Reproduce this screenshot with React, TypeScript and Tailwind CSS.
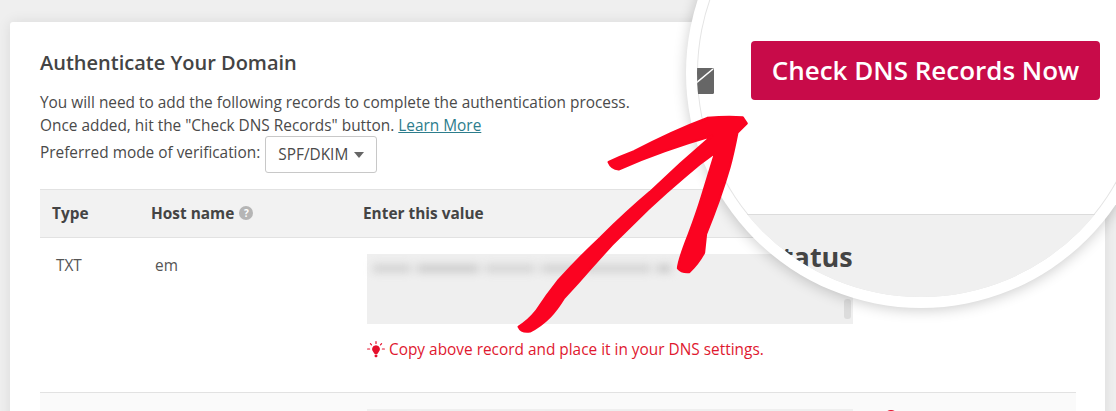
import React from 'react';

function BulbIcon() {
  return (
    <svg width="18" height="18" viewBox="0 0 18 18" className="shrink-0">
      <path d="M9 4.2a4 4 0 0 0-2.4 7.2c.6.5.8 1 .9 1.7h3c.1-.7.3-1.2.9-1.7A4 4 0 0 0 9 4.2z" fill="#e5102c" />
      <rect x="7.6" y="13.6" width="2.8" height="2.6" rx="1" fill="#e5102c" />
      <path d="M9 .6v1.8M3.4 2.6l1.1 1.3M14.6 2.6l-1.1 1.3M.6 8h2M15.4 8h2" stroke="#e5102c" strokeWidth="1.2" strokeLinecap="round" />
    </svg>
  );
}

function DnsValue({ short }: { short?: boolean }) {
  return (
    <div className={`relative w-[486px] bg-[#efefef] ${short ? 'h-[40px]' : 'h-[70px]'}`}>
      <div className="flex gap-[6px] pl-[6px] pt-[11px] blur-[4px]">
        <div className="h-[7px] w-[38px] bg-[#cdcdcd]" />
        <div className="h-[7px] w-[62px] bg-[#c6c6c6]" />
        <div className="h-[7px] w-[50px] bg-[#d0d0d0]" />
        <div className="h-[7px] w-[38px] bg-[#cdcdcd]" />
        <div className="h-[7px] w-[66px] bg-[#cecece]" />
        <div className="h-[7px] w-[14px] bg-[#c2c2c2]" />
      </div>
      {!short && <div className="absolute bottom-[5px] right-[2px] h-[20px] w-[7px] rounded-[3px] bg-[#dcdcdc]" />}
    </div>
  );
}

export default function App() {
  return (
    <div className="relative h-[411px] w-[1116px] overflow-hidden bg-[#efefef] pl-[10px] pt-[22px] font-['Open_Sans',sans-serif] text-[#4a4a4a]">
      <div className="h-[420px] w-[1095px] rounded-[3px] bg-white pl-[30px] pt-[27px] shadow-[0_0_14px_rgba(0,0,0,0.09)]">
        <h2 className="text-[20px] font-semibold leading-[28px] text-[#444]">Authenticate Your Domain</h2>
        <p className="mt-[14px] text-[15.4px] leading-[23px]">
          You will need to add the following records to complete the authentication process.
          <br />
          Once added, hit the "Check DNS Records" button.{' '}
          <a className="text-[#2d7d8c] underline">Learn More</a>
        </p>
        <div className="mt-[-1px] flex h-[37px] items-center gap-[5px] text-[15.4px]">
          <span className="mt-[-3px]">Preferred mode of verification:</span>
          <div className="flex h-[37px] w-[112px] items-center justify-center gap-[6px] rounded-[3px] border border-[#c8c8c8] font-medium">
            SPF/DKIM
            <svg width="10" height="6" viewBox="0 0 10 6">
              <path d="M0 0h10L5 6z" fill="#666" />
            </svg>
          </div>
        </div>

        <div className="mt-[16px] w-[1036px]">
          <div className="flex h-[49px] items-center border-y border-[#e2e2e2] bg-[#f2f2f2] text-[15.4px] font-bold text-[#444]">
            <div className="w-[111px] pl-[12px]">Type</div>
            <div className="flex w-[212px] items-center gap-[5px]">
              Host name
              <span className="flex h-[14px] w-[14px] items-center justify-center rounded-full bg-[#b5b5b5] text-[10px] text-white">?</span>
            </div>
            <div>Enter this value</div>
          </div>
          <div className="flex h-[155px] border-b border-[#e2e2e2] pt-[16px] text-[15.4px] text-[#555]">
            <div className="w-[115px] pl-[16px] leading-[24px]">TXT</div>
            <div className="w-[212px] leading-[24px]">em</div>
            <div>
              <DnsValue />
              <div className="mt-[15px] flex items-center gap-[4px] leading-[22px] text-[#e0182f]">
                <BulbIcon />
                Copy above record and place it in your DNS settings.
              </div>
            </div>
          </div>
          <div className="flex h-[60px] bg-[#fafafa] pl-[327px] pt-[16px]">
            <DnsValue short />
            <div className="ml-[31px] mt-[1px] h-[14px] w-[14px] rounded-full bg-[#e5102c]" />
          </div>
        </div>
      </div>

      {/* magnifier lens */}
      <div className="absolute left-[686px] top-[-162px] h-[470px] w-[470px] rounded-full bg-white p-[11px] shadow-[0_2px_14px_rgba(0,0,0,0.2)]">
        <div className="h-full w-full overflow-hidden rounded-full bg-white shadow-[inset_0_0_0_1px_#e4e4e4]">
          <div className="flex h-[366px] border-b border-[#dcdcdc] pt-[192px]">
            <svg width="18" height="26" viewBox="0 0 18 26" className="ml-[-1px] mt-[27px] shrink-0">
              <rect width="18" height="26" rx="1.5" fill="#666" />
              <path d="M-1 16L17 1" stroke="#fff" strokeWidth="1.6" />
            </svg>
            <button className="ml-[37px] h-[59px] w-[349px] rounded-[4px] bg-[#c80b49] text-[26px] font-semibold text-white">
              Check DNS Records Now
            </button>
          </div>
          <div className="h-full bg-[#f0f0f0] pl-[70px] pt-[24px] text-[27px] font-bold leading-[36px] text-[#444]">
            Status
          </div>
        </div>
      </div>

      {/* hand drawn arrow */}
      <svg viewBox="0 0 780 720" className="absolute left-[500px] top-[100px] h-[240px] w-[260px]">
        <path
          d="M56 680 Q84 664 108 634 Q140 585 176 540 Q240 470 300 414 Q380 335 450 276 Q540 190 636 108 Q490 150 356 208 Q334 206 326 186 Q360 170 402 154 Q520 92 622 54 Q680 48 728 52 L740 70 L712 98 Q700 160 688 204 Q660 300 618 402 L612 458 Q595 490 568 516 Q544 518 534 505 Q536 480 566 404 Q590 340 606 288 L646 158 Q600 190 556 228 Q500 275 446 326 L336 434 Q285 490 234 548 L192 594 Q170 630 150 650 Q120 680 90 694 Q64 698 56 680 Z"
          fill="#fb0321"
          stroke="#fb0321"
          strokeWidth="7"
          strokeLinejoin="round"
        />
      </svg>
    </div>
  );
}
